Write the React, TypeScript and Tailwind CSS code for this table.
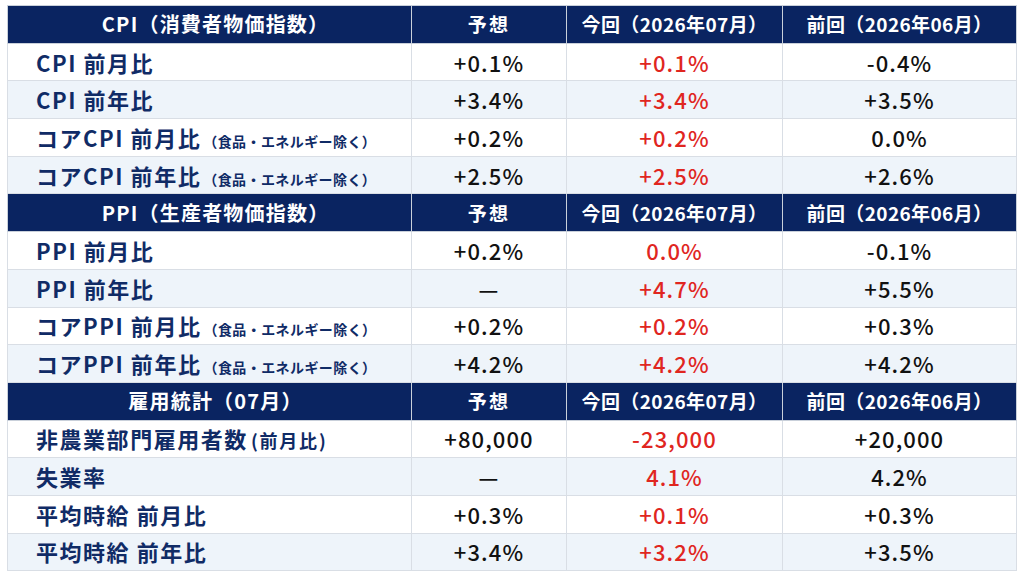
import React from "react";

type Row = {
  label: string;
  note?: string;
  big?: boolean;
  forecast: string;
  current: string;
  previous: string;
};

type Section = {
  title: string;
  rows: Row[];
};

const NOTE = "（食品・エネルギー除く）";

const sections: Section[] = [
  {
    title: "CPI（消費者物価指数）",
    rows: [
      { label: "CPI 前月比", forecast: "+0.1%", current: "+0.1%", previous: "-0.4%" },
      { label: "CPI 前年比", forecast: "+3.4%", current: "+3.4%", previous: "+3.5%" },
      { label: "コアCPI 前月比", note: NOTE, forecast: "+0.2%", current: "+0.2%", previous: "0.0%" },
      { label: "コアCPI 前年比", note: NOTE, forecast: "+2.5%", current: "+2.5%", previous: "+2.6%" },
    ],
  },
  {
    title: "PPI（生産者物価指数）",
    rows: [
      { label: "PPI 前月比", forecast: "+0.2%", current: "0.0%", previous: "-0.1%" },
      { label: "PPI 前年比", forecast: "—", current: "+4.7%", previous: "+5.5%" },
      { label: "コアPPI 前月比", note: NOTE, forecast: "+0.2%", current: "+0.2%", previous: "+0.3%" },
      { label: "コアPPI 前年比", note: NOTE, forecast: "+4.2%", current: "+4.2%", previous: "+4.2%" },
    ],
  },
  {
    title: "雇用統計（07月）",
    rows: [
      { label: "非農業部門雇用者数", note: "(前月比)", big: true, forecast: "+80,000", current: "-23,000", previous: "+20,000" },
      { label: "失業率", forecast: "—", current: "4.1%", previous: "4.2%" },
      { label: "平均時給 前月比", forecast: "+0.3%", current: "+0.1%", previous: "+0.3%" },
      { label: "平均時給 前年比", forecast: "+3.4%", current: "+3.2%", previous: "+3.5%" },
    ],
  },
];

const font = { fontFamily: '"Noto Sans CJK JP", "Noto Sans", sans-serif' };

export default function App() {
  return (
    <div className="w-[1024px] h-[576px] bg-white pl-[7px] pt-[5px]" style={font}>
      <table className="w-[1009px] border-collapse table-fixed">
        <colgroup>
          <col className="w-[404px]" />
          <col className="w-[155px]" />
          <col className="w-[216px]" />
          <col className="w-[234px]" />
        </colgroup>
        <tbody>
          {sections.map((section) => (
            <React.Fragment key={section.title}>
              <tr className="h-[37.7px] bg-[#0a2461] text-white font-bold">
                <th className="border border-[#c9d0da] text-center text-[20px] tracking-[0.06em] pl-[12px]">{section.title}</th>
                <th className="border border-[#c9d0da] text-center text-[19px] tracking-[0.12em]">予想</th>
                <th className="border border-[#c9d0da] text-center text-[19px] tracking-[0.02em]">今回（2026年07月）</th>
                <th className="border border-[#c9d0da] text-center text-[19px] tracking-[0.02em]">前回（2026年06月）</th>
              </tr>
              {section.rows.map((row, i) => (
                <tr
                  key={row.label}
                  className={`h-[37.7px] ${i % 2 === 1 ? "bg-[#eef4fa]" : "bg-white"}`}
                >
                  <td className="border border-[#d9dee5] pl-[28px] text-[#102b66] font-bold whitespace-nowrap">
                    <span className="text-[22px] tracking-[0.07em]">{row.label}</span>
                    {row.note && (
                      <span
                        className={
                          row.big
                            ? "text-[18px] tracking-[0.1em] ml-[3px]"
                            : "text-[14px] tracking-[0.03em] ml-[2px]"
                        }
                      >
                        {row.note}
                      </span>
                    )}
                  </td>
                  <td className="border border-[#d9dee5] text-center text-[22px] font-medium text-[#111] tracking-[0.05em]">
                    {row.forecast}
                  </td>
                  <td className="border border-[#d9dee5] text-center text-[22px] font-medium text-[#e0261f] tracking-[0.05em]">
                    {row.current}
                  </td>
                  <td className="border border-[#d9dee5] text-center text-[22px] font-medium text-[#111] tracking-[0.05em]">
                    {row.previous}
                  </td>
                </tr>
              ))}
            </React.Fragment>
          ))}
        </tbody>
      </table>
    </div>
  );
}
